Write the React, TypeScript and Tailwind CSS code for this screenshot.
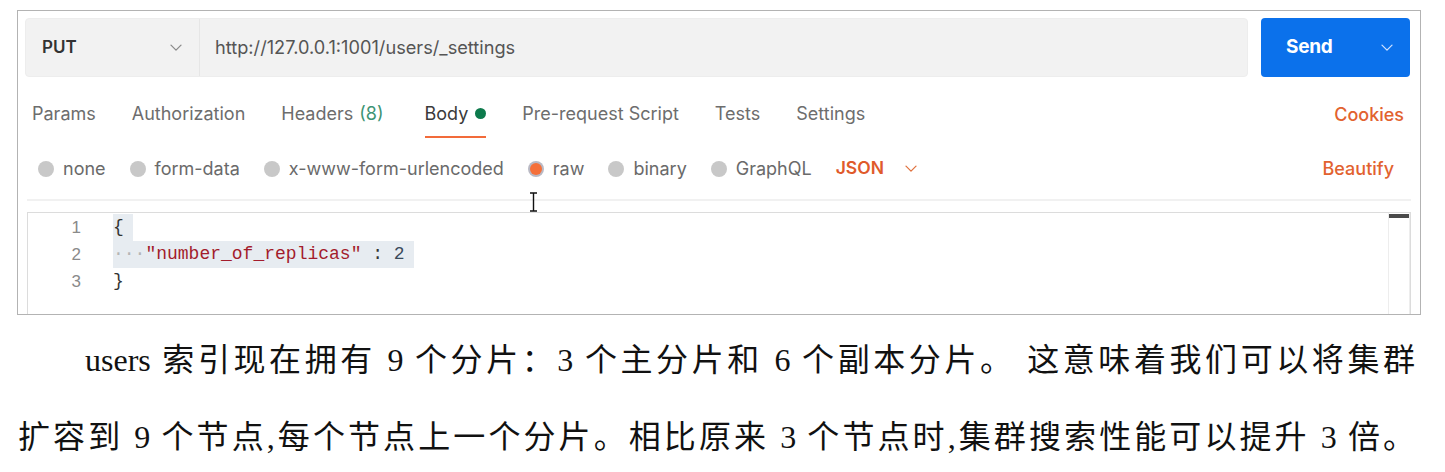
import React from "react";

const Chevron = ({ className = "", color = "#8a8a8a", w = 12 }: { className?: string; color?: string; w?: number }) => (
  <svg width={w} height={w * 0.6} viewBox="0 0 12 7" className={className} fill="none">
    <path d="M1 1l5 5 5-5" stroke={color} strokeWidth="1.3" strokeLinecap="round" strokeLinejoin="round" />
  </svg>
);

const Radio = ({ label, active = false }: { label: string; active?: boolean }) => (
  <div className="flex items-center gap-[9px]">
    {active ? (
      <span className="w-[16px] h-[16px] rounded-full bg-[#b9b9c4] flex items-center justify-center">
        <span className="w-[12px] h-[12px] rounded-full bg-[#f5703a]" />
      </span>
    ) : (
      <span className="w-[16px] h-[16px] rounded-full bg-[#c8c8c8]" />
    )}
    <span className="text-[18px] text-[#6a6a6a]">{label}</span>
  </div>
);

export default function App() {
  const tabs = ["Params", "Authorization", "Headers", "Body", "Pre-request Script", "Tests", "Settings"];
  return (
    <div className="w-[1445px] h-[472px] bg-white relative overflow-hidden" style={{ fontFamily: "Inter, 'Liberation Sans', sans-serif" }}>
      <div className="ml-[17px] mt-[10px] w-[1404px] h-[305px] border border-[#b3b3b3] flex flex-col">
        {/* request bar */}
        <div className="mt-[7px] ml-[7px] mr-[10px] flex gap-[13px] h-[59px] shrink-0">
          <div className="flex-1 flex bg-[#f2f2f2] rounded-[4px] border border-[#ededed]">
            <div className="w-[174px] flex items-center justify-between pl-[16px] pr-[17px] border-r border-[#e6e6e6]">
              <span className="text-[17px] font-semibold text-[#333]">PUT</span>
              <Chevron />
            </div>
            <div className="flex items-center pl-[15px] text-[18.2px] text-[#555]">http://127.0.0.1:1001/users/_settings</div>
          </div>
          <div className="w-[149px] bg-[#0b71eb] rounded-[4px] flex items-center pl-[25px] pr-[17px] justify-between">
            <span className="text-[19px] font-bold text-white tracking-[-0.3px]">Send</span>
            <Chevron color="#cfe1ff" />
          </div>
        </div>

        {/* tabs */}
        <div className="mt-[14px] h-[47px] flex items-stretch pl-[14px] pr-[16px] shrink-0">
          <div className="flex items-stretch gap-[36px]">
            {tabs.map((t) => (
              <div
                key={t}
                className={`flex items-center text-[18px] border-b-2 ${t === "Body" ? "ml-[5px] border-[#f26b3a] text-[#3a3a3a]" : "border-transparent text-[#6d6d6d]"}`}
              >
                {t}
                {t === "Headers" && <span className="ml-[6px] text-[#3e9474]">(8)</span>}
                {t === "Body" && <span className="ml-[7px] w-[11px] h-[11px] rounded-full bg-[#0d7a4c]" />}
              </div>
            ))}
          </div>
          <div className="ml-auto flex items-center text-[18px] font-medium text-[#e2622f]">Cookies</div>
        </div>

        {/* body options */}
        <div className="h-[61px] flex items-center pl-[20px] pr-[26px] shrink-0">
          <div className="flex items-center gap-[24px]">
            <Radio label="none" />
            <Radio label="form-data" />
            <Radio label="x-www-form-urlencoded" />
            <Radio label="raw" active />
            <Radio label="binary" />
            <Radio label="GraphQL" />
            <div className="flex items-center gap-[21px]">
              <span className="text-[17.5px] font-semibold text-[#e05a2b]">JSON</span>
              <Chevron color="#e0723f" />
            </div>
          </div>
          <div className="ml-auto text-[18px] font-medium text-[#e2622f]">Beautify</div>
        </div>

        <div className="h-[2px] mx-[9px] bg-[#f1f1f1] shrink-0" />

        {/* editor */}
        <div className="mt-[11px] ml-[9px] mr-[9px] flex-1 flex border-t border-l border-r border-[#dcdcdc]">
          <div className="w-[85px] pr-[32px] pt-px flex flex-col items-end text-[17px] text-[#8a8a8a]" style={{ fontFamily: "'Liberation Sans', sans-serif" }}>
            <div className="h-[27px] leading-[27px]">1</div>
            <div className="h-[27px] leading-[27px]">2</div>
            <div className="h-[27px] leading-[27px]">3</div>
          </div>
          <div className="flex-1 pt-px text-[18px]" style={{ fontFamily: "'Liberation Mono', 'DejaVu Sans Mono', monospace" }}>
            <div className="h-[27px] leading-[27px] flex">
              <span className="w-[20px] bg-[#e7ecf1] text-[#333]">{"{"}</span>
            </div>
            <div className="h-[27px] leading-[27px] flex">
              <span className="w-[301px] bg-[#e7ecf1] whitespace-pre">
                <span className="text-[#b5b5b5]">{"···"}</span>
                <span className="text-[#a31c2c]">"number_of_replicas"</span>
                <span className="text-[#333]"> : </span>
                <span className="text-[#3a4a5a]">2</span>
              </span>
            </div>
            <div className="h-[27px] leading-[27px] text-[#333]">{"}"}</div>
          </div>
          <div className="w-[22px] border-l border-r border-[#ededed] flex flex-col">
            <div className="h-[4px] mt-px bg-[#4a4a4a]" />
          </div>
        </div>
      </div>

      {/* paragraph */}
      <div
        className="mt-[7px] pl-[18px] pr-[30px] text-[32px] text-[#111]"
        style={{ fontFamily: "'Liberation Serif', 'Noto Sans CJK SC', serif" }}
      >
        <div className="h-[77px] leading-[77px] pl-[67px] text-justify [text-align-last:justify] whitespace-nowrap">
          users 索引现在拥有 9 个分片：3 个主分片和 6 个副本分片。 这意味着我们可以将集群
        </div>
        <div className="h-[77px] leading-[77px] text-justify [text-align-last:justify] whitespace-nowrap">
          扩容到 9 个节点,每个节点上一个分片。相比原来 3 个节点时,集群搜索性能可以提升 3 倍。
        </div>
      </div>

      {/* mouse text cursor */}
      <svg className="absolute left-[528px] top-[192px]" width="11" height="20" viewBox="0 0 11 20" fill="none">
        <path d="M2 1h3.5M5.5 1h3.5M5.5 1v18M2 19h7" stroke="#111" strokeWidth="1.4" />
      </svg>
    </div>
  );
}
